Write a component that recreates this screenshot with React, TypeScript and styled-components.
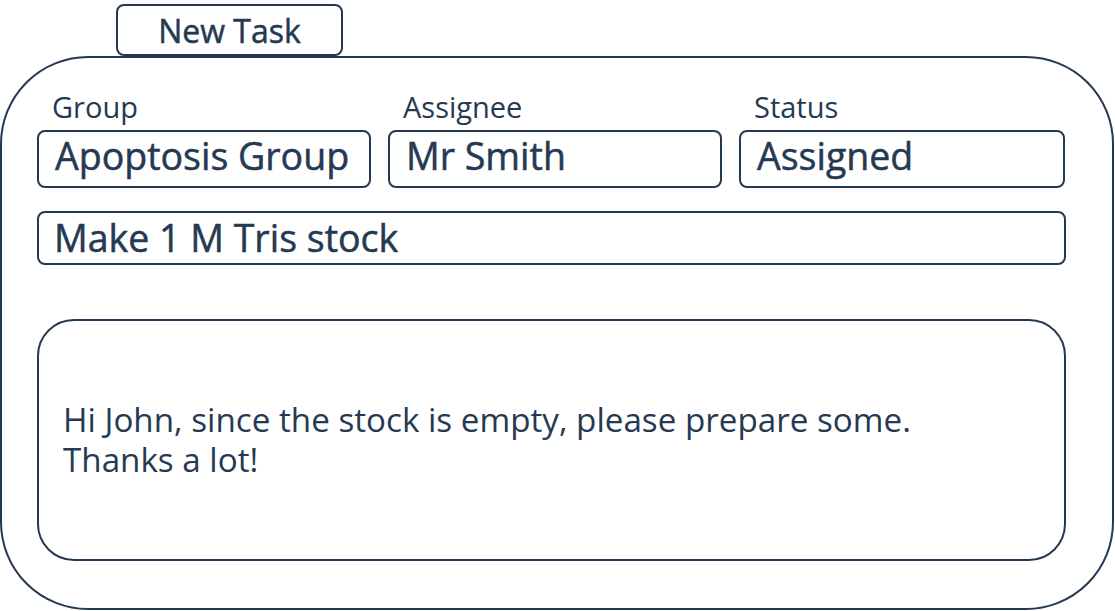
import React from 'react';
import styled, { createGlobalStyle } from 'styled-components';

const ink = '#253a52';

const GlobalStyle = createGlobalStyle`
  body {
    margin: 0;
    background: #ffffff;
    font-family: "Open Sans", "Liberation Sans", sans-serif;
    color: ${ink};
  }
`;

const Page = styled.div`
  width: 1115px;
  height: 611px;
  padding-top: 4px;
  box-sizing: border-box;
  display: flex;
  flex-direction: column;
  align-items: flex-start;
`;

const Tab = styled.div`
  margin-left: 116px;
  width: 227px;
  height: 52px;
  box-sizing: border-box;
  border: 2px solid ${ink};
  border-radius: 8px;
  display: flex;
  align-items: center;
  justify-content: center;
  font-size: 32px;
  -webkit-text-stroke: 0.5px ${ink};
`;

const Panel = styled.div`
  width: 1114px;
  box-sizing: border-box;
  border: 2px solid ${ink};
  border-radius: 88px;
  padding: 32px 46px 47px 35px;
  display: flex;
  flex-direction: column;
`;

const FieldRow = styled.div`
  display: grid;
  grid-template-columns: 334px 334px 326px;
  column-gap: 17px;
`;

const Field = styled.div`
  display: flex;
  flex-direction: column;
`;

const Label = styled.div`
  font-size: 29px;
  line-height: 34px;
  padding-left: 15px;
  margin-bottom: 6px;
`;

const Box = styled.div<{ $h: number; $pad: number }>`
  height: ${p => p.$h}px;
  box-sizing: border-box;
  border: 2px solid ${ink};
  border-radius: 8px;
  padding: ${p => p.$pad}px 0 0 16px;
  font-size: 37.5px;
  -webkit-text-stroke: 0.5px ${ink};
  line-height: 44px;
  white-space: nowrap;
`;

const TitleBox = styled(Box)`
  margin-top: 23px;
  padding-left: 15px;
`;

const Message = styled.div`
  margin-top: 54px;
  height: 242px;
  box-sizing: border-box;
  border: 2px solid ${ink};
  border-radius: 37px;
  padding-left: 24px;
  display: flex;
  flex-direction: column;
  justify-content: center;
  font-size: 33.2px;
  line-height: 40px;
`;

const fields = [
  { label: 'Group', value: 'Apoptosis Group' },
  { label: 'Assignee', value: 'Mr Smith' },
  { label: 'Status', value: 'Assigned' },
];

const App: React.FC = () => {
  return (
    <Page>
      <GlobalStyle />
      <Tab>New Task</Tab>
      <Panel>
        <FieldRow>
          {fields.map(f => (
            <Field key={f.label}>
              <Label>{f.label}</Label>
              <Box $h={58} $pad={2}>{f.value}</Box>
            </Field>
          ))}
        </FieldRow>
        <TitleBox $h={54} $pad={3}>Make 1 M Tris stock</TitleBox>
        <Message>
          <div>Hi John, since the stock is empty, please prepare some.</div>
          <div>Thanks a lot!</div>
        </Message>
      </Panel>
    </Page>
  );
}

export default App;
